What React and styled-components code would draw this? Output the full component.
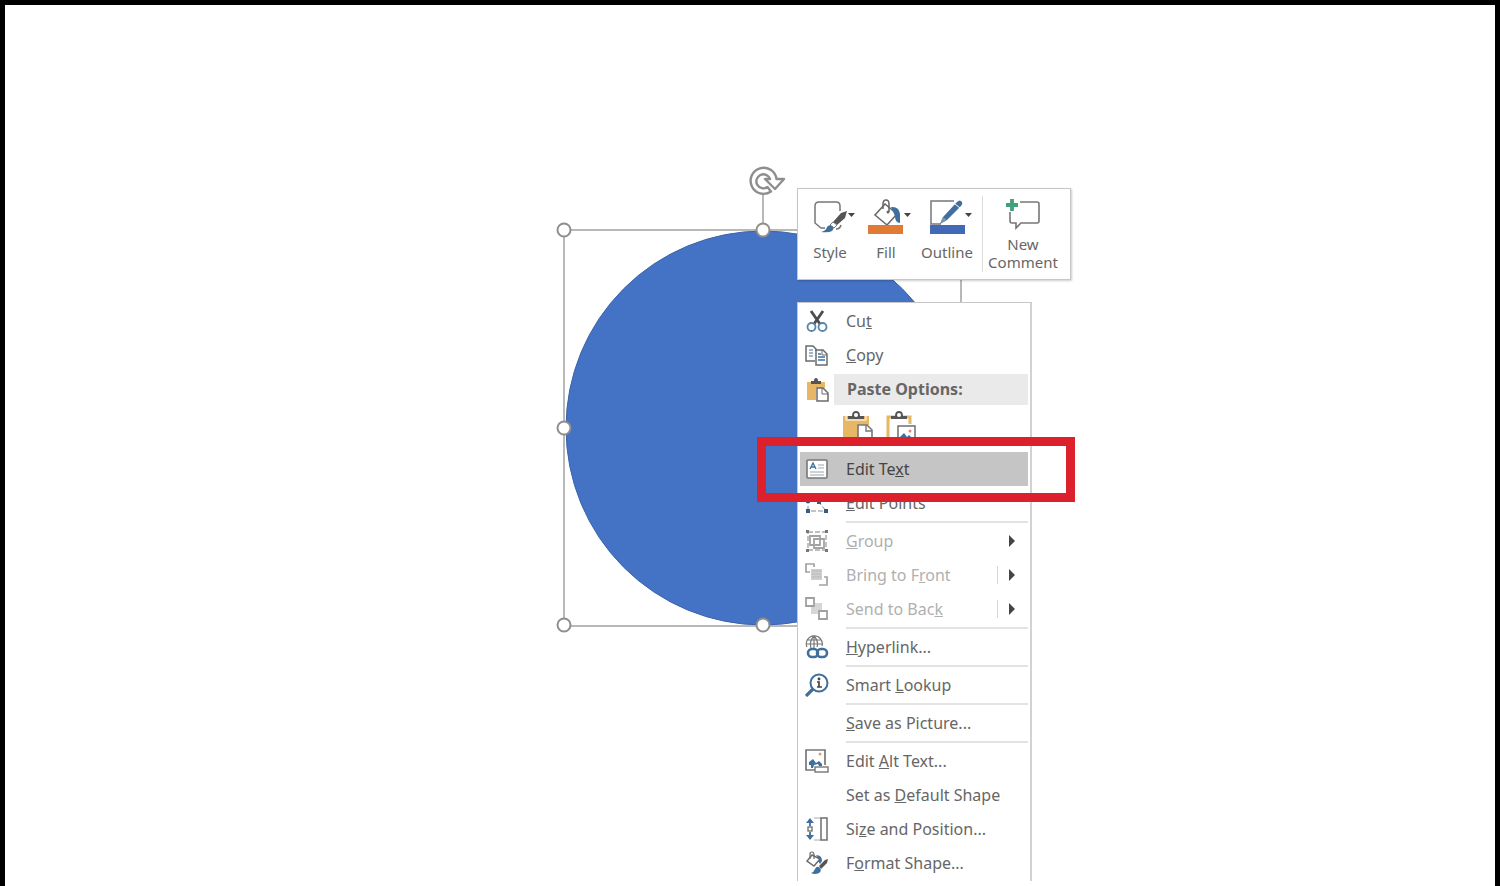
import React from 'react'
import styled, { createGlobalStyle } from 'styled-components'

const GREY = '#6b6b6b'
const BLUE = '#3f6f9f'
const SAND = '#e8b765'


const SelectedShape = () => (
  <ShapeArt viewBox="550 160 420 480" width="420" height="480" role="img" aria-label="Selected circle">
    <rect x="564" y="230" width="397" height="396" fill="none" stroke="#b8b8b8" strokeWidth="2" />
    <path d="M763 195V230" stroke="#b8b8b8" strokeWidth="2" />
    <circle cx="763" cy="428" r="197" fill="#4472c4" stroke="#3c64a8" strokeWidth="1" />
    {[[564, 230], [763, 230], [961, 230], [564, 428], [961, 428], [564, 625], [763, 625], [961, 625]].map(([x, y]) => (
      <circle key={`${x}-${y}`} cx={x} cy={y} r="6.5" fill="#fff" stroke="#8e8e8e" strokeWidth="2" />
    ))}
    <path
      d="M771 191.500A13 13 0 1 1 776.500 179H784L775 189L765 179H770A7 7 0 1 0 767.500 187Z"
      fill="#fff" stroke="#8e8e8e" strokeWidth="2.4" strokeLinejoin="round"
    />
  </ShapeArt>
)

/* mini toolbar icons */

const StyleIcon = () => (
  <svg width="44" height="36" viewBox="0 0 44 36" fill="none">
    <path d="M13 30H9L3 25V8Q3 4 7 4H24Q28 4 28 8V13" stroke="#777" strokeWidth="1.5" />
    <path d="M35 13L29 15L21 24L25 27L33 20Z" fill="#555" />
    <path d="M21 24L25 27L22 30L18 27Z" fill="#fff" stroke="#777" />
    <path d="M9 34Q14 33 15 29Q17 26 20 28Q23 30 20 33Q17 35 9 34Z" fill={BLUE} />
    <path d="M24 31Q28 31 29 27" stroke="#777" strokeWidth="1.5" />
    <path d="M36 15H43L39.5 19Z" fill="#444" />
  </svg>
)

const FillIcon = () => (
  <svg width="44" height="36" viewBox="0 0 44 36" fill="none">
    <path d="M17 6L7 17L19 27L29 16Z" fill="#fff" stroke="#666" strokeWidth="1.5" />
    <path d="M15 11V6Q15 2 18 2Q21 2 21 6V14" stroke="#666" strokeWidth="1.5" />
    <circle cx="20" cy="14" r="1.5" fill="#666" />
    <path d="M23 9Q31 8 32 16V25Q27 25 27 18Z" fill={BLUE} />
    <rect x="0" y="27" width="35" height="9" fill="#e07a34" />
    <path d="M36 15H43L39.5 19Z" fill="#444" />
  </svg>
)

const OutlineIcon = () => (
  <svg width="44" height="36" viewBox="0 0 44 36" fill="none">
    <path d="M25 3H2V26H12" stroke="#777" strokeWidth="1.5" />
    <path d="M11 26L14 19L28 4Q31 1 33 4Q34 6 32 8L18 22Z" fill={BLUE} />
    <path d="M26 6L31 10" stroke="#fff" />
    <path d="M11 26L14 19L18 22Z" fill="#8194a5" />
    <rect x="1" y="27" width="35" height="9" fill="#4169b5" />
    <path d="M36 15H43L39.5 19Z" fill="#444" />
  </svg>
)

const CommentIcon = () => (
  <svg width="36" height="32" viewBox="0 0 36 32" fill="none">
    <path d="M15 4H32Q34 4 34 6V23Q34 25 32 25H16L11 30V25H7Q5 25 5 23V14" stroke="#777" strokeWidth="1.6" />
    <path d="M7 1V13M1 7H13" stroke="#43a07c" strokeWidth="3.8" />
  </svg>
)

/* context menu icons */

const CutIcon = () => (
  <Glyph viewBox="0 0 24 24">
    <path d="M6 2L15 15M18 2L9 15" stroke="#4d4d4d" strokeWidth="2.8" />
    <circle cx="6.5" cy="18" r="4" stroke="#5685ab" strokeWidth="1.8" />
    <circle cx="17.5" cy="18" r="4" stroke="#5685ab" strokeWidth="1.8" />
  </Glyph>
)

const CopyIcon = () => (
  <Glyph viewBox="0 0 24 24">
    <path d="M10 18H1V3H8L11 6V8" fill="#fff" stroke={GREY} strokeWidth="1.5" />
    <path d="M4 7H8M4 10H8M4 13H8" stroke={BLUE} />
    <path d="M11 7H18L22 11V22H11Z" fill="#fff" stroke={GREY} strokeWidth="1.5" />
    <path d="M17 7V12H22" stroke={GREY} />
    <path d="M13 11H16M13 14H20M13 17H20" stroke={BLUE} strokeWidth="1.3" />
  </Glyph>
)

const PasteIcon = () => (
  <Glyph viewBox="0 0 24 24">
    <path d="M2 4H20V10H11V22H2Z" fill={SAND} />
    <path d="M6 6V3H9Q9 0 11 0Q13 0 13 3H16V6Z" fill="#555" />
    <path d="M12 10H18L23 15V23H12Z" fill="#fff" stroke={GREY} strokeWidth="1.5" />
    <path d="M17 10V16H23" stroke={GREY} />
  </Glyph>
)

const EditTextIcon = () => (
  <Glyph viewBox="0 0 24 24">
    <rect x="2" y="3" width="20" height="18" rx="1" fill="#fff" stroke="#777" strokeWidth="1.6" />
    <path d="M5 12L8 6L11 12M6 10H10" stroke={BLUE} strokeWidth="1.3" />
    <path d="M13 8H19M13 11H19M5 15H19M5 18H19" stroke="#9aa6af" />
  </Glyph>
)

const EditPointsIcon = () => (
  <Glyph viewBox="0 0 24 24">
    <path d="M3 20V9M13 10L21 20M6 20H18" stroke="#888" strokeDasharray="5 2" />
    <path d="M1 18H5V22H1ZM19 18H23V22H19ZM1 8H5V12H1ZM12 9H16V13H12Z" fill="#345d84" />
  </Glyph>
)

const GroupIcon = () => (
  <Glyph viewBox="0 0 24 24">
    <path d="M3 3H21V21H3Z" stroke="#a8a8a8" strokeWidth="1.4" strokeDasharray="5 2" />
    <path d="M5 7H15V16H5ZM9 10H19V19H9Z" stroke="#a3a3a3" strokeWidth="1.8" />
    <path d="M1 1H4V4H1ZM20 1H23V4H20ZM1 20H4V23H1ZM20 20H23V23H20Z" fill="#777" />
  </Glyph>
)

const FrontIcon = () => (
  <Glyph viewBox="0 0 24 24">
    <path d="M5 9H1V1H9V4M14 22H22V14H19" stroke="#a3a3a3" strokeWidth="1.7" />
    <path d="M6 6H17V17H6Z" fill="#cfcfcf" />
    <path d="M7 8H16M7 11H16M7 14H16" stroke="#b8b8b8" />
  </Glyph>
)

const BackIcon = () => (
  <Glyph viewBox="0 0 24 24">
    <path d="M10 6H17V13H13V17H6V10H10Z" fill="#d6d6d6" />
    <path d="M1 1H9V9H1ZM14 14H22V22H14Z" fill="#fff" stroke="#a0a0a0" strokeWidth="1.8" />
  </Glyph>
)

const LinkIcon = () => (
  <Glyph viewBox="0 0 24 24">
    <path d="M2 12A8 8 0 1 1 17 11M2 9H17M3 5H16M9 1V13M6 13Q4 6 9 1Q14 6 12 12" stroke="#777" strokeWidth="1.2" />
    <rect x="3" y="14" width="10" height="8" rx="4" stroke={BLUE} strokeWidth="2.6" />
    <rect x="12" y="14" width="10" height="8" rx="4" stroke={BLUE} strokeWidth="2.6" />
  </Glyph>
)

const LookupIcon = () => (
  <Glyph viewBox="0 0 24 24">
    <circle cx="14" cy="10" r="8.5" stroke={BLUE} strokeWidth="2" />
    <path d="M8 16L1 23" stroke={BLUE} strokeWidth="3.2" />
    <path d="M12 9H14V14M12 14H17" stroke="#444" strokeWidth="1.7" />
    <circle cx="14" cy="6" r="1.4" fill="#444" />
  </Glyph>
)

const AltTextIcon = () => (
  <Glyph viewBox="0 0 24 24">
    <path d="M10 21H1V1H20V16" stroke="#777" strokeWidth="1.7" />
    <path d="M4 16V13L8 10L11 14L14 12L17 15V17H14L13 15L9 16L8 19H6V16Z" fill={BLUE} />
    <circle cx="15" cy="5" r="1.5" fill="#d9a277" />
    <rect x="10" y="18" width="13" height="5" fill="#fff" stroke="#777" strokeWidth="1.4" />
  </Glyph>
)

const SizeIcon = () => (
  <Glyph viewBox="0 0 24 24">
    <path d="M5 1L9 6H1ZM5 23L1 18H9Z" fill={BLUE} />
    <path d="M5 5V9M5 15V19" stroke={BLUE} strokeWidth="1.8" />
    <rect x="3" y="10" width="4" height="4" stroke={GREY} strokeWidth="1.3" />
    <path d="M9 1H16M9 23H16" stroke="#aaa" />
    <rect x="16" y="1" width="6" height="22" stroke="#777" strokeWidth="1.6" />
  </Glyph>
)

const FormatIcon = () => (
  <Glyph viewBox="0 0 24 24">
    <path d="M7 4L2 10L9 15L15 8Z" fill="#fff" stroke={GREY} strokeWidth="1.5" />
    <path d="M5 8V3Q5 1 7 1Q9 1 9 4V8" stroke={GREY} strokeWidth="1.2" />
    <path d="M11 4Q17 4 17 10L15 13Q13 11 14 8Z" fill={BLUE} />
    <path d="M23 8L20 9L14 15L16 18L22 12Z" fill="#555" />
    <path d="M6 22Q9 21 10 18Q12 14 15 17Q17 20 14 22Q10 24 6 22Z" fill={BLUE} />
  </Glyph>
)

const Clip = () => (
  <>
    <path d="M5 8V5H9Q9 0 13 0Q17 0 17 5H21V8Z" fill="#555" />
    <circle cx="13" cy="4" r="2" fill="#fff" />
  </>
)

const KeepPasteIcon = () => (
  <svg width="30" height="34" viewBox="0 0 30 34" fill="none">
    <path d="M0 5H26V14H15V33H0Z" fill={SAND} />
    <path d="M3 5V9H23V5" stroke="#fff" />
    <Clip />
    <path d="M15 14H24L29 19V33H15Z" fill="#fff" stroke="#777" strokeWidth="1.6" />
    <path d="M23 14V20H29" stroke="#777" strokeWidth="1.4" />
  </svg>
)

const PicturePasteIcon = () => (
  <svg width="30" height="34" viewBox="0 0 30 34" fill="none">
    <path d="M10 31H2V6H24V13" stroke={SAND} strokeWidth="3" />
    <path d="M4 9H22" stroke="#fff" strokeWidth="3" />
    <Clip />
    <rect x="12" y="15" width="17" height="17" fill="#fff" stroke="#777" strokeWidth="1.6" />
    <path d="M14 29V26L18 22L21 26L23 24L27 28V29Z" fill={BLUE} />
    <circle cx="24" cy="20" r="1.5" fill="#d98a7a" />
  </svg>
)

const Arrow = () => (
  <svg width="8" height="12" viewBox="0 0 8 12"><path d="M1 0L7 6L1 12Z" fill="#444" /></svg>
)


const App = () => {
  return (
    <Slide>
      <GlobalStyle />
      <SelectedShape />

      <MiniToolbar role="toolbar" aria-label="Shape formatting">
        <Tool $width={56} $shift><StyleIcon /><span>Style</span></Tool>
        <Tool $width={56} $shift><FillIcon /><span>Fill</span></Tool>
        <Tool $width={66} $shift><OutlineIcon /><span>Outline</span></Tool>
        <ToolDivider />
        <Tool $width={80}><CommentIcon /><span>New<br />Comment</span></Tool>
      </MiniToolbar>

      <ContextMenu aria-label="Shape menu">
        <MenuItem><CutIcon /><span>Cu<u>t</u></span></MenuItem>
        <MenuItem><CopyIcon /><span><u>C</u>opy</span></MenuItem>
        <PasteHeader><PasteIcon /><h2>Paste Options:</h2></PasteHeader>
        <PasteGallery>
          <PasteButton aria-label="Use Destination Theme"><KeepPasteIcon /></PasteButton>
          <PasteButton aria-label="Picture"><PicturePasteIcon /></PasteButton>
        </PasteGallery>
        <MenuItem $active><EditTextIcon /><span>Edit Te<u>x</u>t</span></MenuItem>
        <MenuItem><EditPointsIcon /><span><u>E</u>dit Points</span></MenuItem>
        <Separator />
        <MenuItem disabled><GroupIcon /><span><u>G</u>roup</span><More><Arrow /></More></MenuItem>
        <MenuItem disabled><FrontIcon /><span>Bring to F<u>r</u>ont</span><More $split><Arrow /></More></MenuItem>
        <MenuItem disabled><BackIcon /><span>Send to Bac<u>k</u></span><More $split><Arrow /></More></MenuItem>
        <Separator />
        <MenuItem><LinkIcon /><span><u>H</u>yperlink...</span></MenuItem>
        <Separator />
        <MenuItem><LookupIcon /><span>Smart <u>L</u>ookup</span></MenuItem>
        <Separator />
        <MenuItem><NoIcon /><span><u>S</u>ave as Picture...</span></MenuItem>
        <Separator />
        <MenuItem><AltTextIcon /><span>Edit <u>A</u>lt Text...</span></MenuItem>
        <MenuItem><NoIcon /><span>Set as <u>D</u>efault Shape</span></MenuItem>
        <MenuItem><SizeIcon /><span>Si<u>z</u>e and Position...</span></MenuItem>
        <MenuItem><FormatIcon /><span>F<u>o</u>rmat Shape...</span></MenuItem>
      </ContextMenu>

      <Highlight />
    </Slide>
  )
}


const GlobalStyle = createGlobalStyle`
  * {
    box-sizing:border-box;
  }

  body{
    margin:0;
    background-color:#fff;
    font-family:"Noto Sans", "Open Sans", sans-serif;
  }

  button{
    border:0;
    padding:0;
    background:none;
    color:inherit;
    font:inherit;
  }
`;

const Slide = styled.main`
  position:relative;
  min-height:100vh;
  overflow:hidden;
  background-color:#fff;
  border:5px solid #000;
  border-bottom:0;
`;

const ShapeArt = styled.svg`
  position:absolute;
  top:155px;
  left:calc(50% - 200px);
`;

const MiniToolbar = styled.div`
  position:absolute;
  top:183px;
  left:calc(50% + 47px);
  display:flex;
  height:92px;
  padding:9px 7px 7px 4px;
  background-color:#fff;
  border:1px solid #c6c6c6;
  box-shadow:1px 1px 2px rgba(0, 0, 0, 0.2);
  color:#666;
  font-size:15px;
  line-height:18px;
`;

const Tool = styled.button`
  width:${props => props.$width}px;
  display:flex;
  flex-direction:column;
  align-items:center;
  justify-content:flex-start;
  gap:${props => props.$shift ? '9px' : '5px'};

  svg{
    flex-shrink:0;
    margin-left:${props => props.$shift ? '8px' : '0'};
  }
`;

const ToolDivider = styled.div`
  width:1px;
  margin:-2px 0 0 2px;
  background-color:#dcdcdc;
`;

const ContextMenu = styled.nav`
  position:absolute;
  top:297px;
  left:calc(50% + 47px);
  width:235px;
  padding:1px 2px 1px 2px;
  background-color:#fff;
  border:1px solid #c6c6c6;
  border-right:2px solid #d2d2d2;
  border-bottom:0;
  color:#666;
  font-size:16px;
  line-height:22px;

  u{
    text-underline-offset:1px;
    text-decoration-thickness:1px;
  }
`;

const MenuItem = styled.button`
  width:100%;
  height:34px;
  display:flex;
  align-items:center;
  gap:17px;
  padding-left:5px;
  text-align:left;
  white-space:nowrap;
  background-color:${props => props.$active ? '#c5c5c5' : 'transparent'};
  color:${props => props.$active ? '#444' : '#666'};

  &:disabled{
    color:#b0b0b0;
  }
`;

const Glyph = styled.svg.attrs({ width: 24, height: 24, fill: 'none' })`
  flex-shrink:0;
`;

const NoIcon = styled.i`
  width:24px;
`;

const More = styled.span`
  height:18px;
  margin-left:auto;
  padding:0 12px 0 10px;
  display:flex;
  align-items:center;
  border-left:1px solid ${props => props.$split ? '#d6d6d6' : 'transparent'};
`;

const PasteHeader = styled.div`
  display:flex;
  align-items:center;
  gap:5px;
  margin-top:2px;
  padding-left:5px;

  h2{
    flex:1;
    height:31px;
    margin:0;
    padding-left:13px;
    background-color:#eaeaea;
    font-size:16px;
    line-height:31px;
  }
`;

const PasteGallery = styled.div`
  height:47px;
  display:flex;
  gap:13px;
  padding:6px 0 0 43px;
`;

const PasteButton = styled.button`
  height:34px;
`;

const Separator = styled.hr`
  height:2px;
  margin:1px 0 1px 46px;
  border:0;
  background-color:#e3e3e3;
`;

const Highlight = styled.div`
  position:absolute;
  top:432px;
  left:calc(50% + 7px);
  width:318px;
  height:65px;
  border:9px solid #dc212c;
`;


export default App
